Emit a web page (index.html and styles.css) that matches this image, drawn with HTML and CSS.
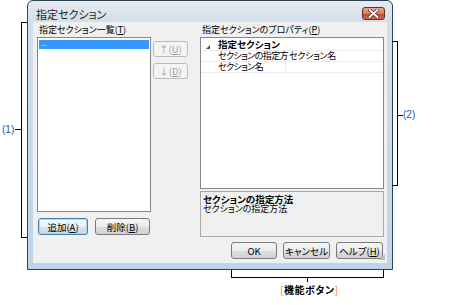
FILE: index.html
```html
<!DOCTYPE html>
<html lang="ja">
<head>
    <meta charset="UTF-8">
    <title>指定セクション</title>
    <link rel="stylesheet" href="styles.css">
</head>
<body>
    <div class="figure">
        <div class="window">
            <div class="titlebar">
                <span class="title">指定セクション</span>
                <span class="close-btn">
                    <svg width="11" height="9" viewBox="0 0 11 9">
                        <path d="M1.5 1 L9.5 8 M9.5 1 L1.5 8" stroke="#5a2418" stroke-width="3.4" stroke-linecap="round"/>
                        <path d="M1.5 1 L9.5 8 M9.5 1 L1.5 8" stroke="#ffffff" stroke-width="2" stroke-linecap="round"/>
                    </svg>
                </span>
            </div>
            <div class="client">
                <div class="main-row">
                    <div class="col-list">
                        <div class="label">指定セクション一覧(<u>T</u>)</div>
                        <div class="listbox">
                            <div class="list-item selected">--</div>
                        </div>
                        <div class="list-buttons">
                            <button class="btn btn-default btn-add">追加(<u>A</u>)</button>
                            <button class="btn btn-delete">削除(<u>B</u>)</button>
                        </div>
                    </div>
                    <div class="col-move">
                        <button class="btn btn-disabled">↑(<u>U</u>)</button>
                        <button class="btn btn-disabled">↓(<u>D</u>)</button>
                    </div>
                    <div class="col-props">
                        <div class="label">指定セクションのプロパティ(<u>P</u>)</div>
                        <div class="propgrid">
                            <div class="pg-category"><span class="pg-arrow"></span>指定セクション</div>
                            <div class="pg-row">
                                <span class="pg-name">セクションの指定方</span>
                                <span class="pg-value">セクション名</span>
                            </div>
                            <div class="pg-row">
                                <span class="pg-name">セクション名</span>
                                <span class="pg-value"></span>
                            </div>
                        </div>
                        <div class="pg-desc">
                            <div class="desc-title">セクションの指定方法</div>
                            <div class="desc-text">セクションの指定方法</div>
                        </div>
                    </div>
                </div>
                <div class="footer">
                    <button class="btn btn-ok">OK</button>
                    <button class="btn btn-cancel">キャンセル</button>
                    <button class="btn btn-help">ヘルプ(<u>H</u>)</button>
                </div>
                <span class="grip"></span>
            </div>
        </div>

        <!-- callouts -->
        <div class="bracket bracket-left"></div>
        <div class="tick tick-left"></div>
        <span class="callout callout-1">(1)</span>

        <div class="bracket bracket-right"></div>
        <div class="tick tick-right"></div>
        <span class="callout callout-2">(2)</span>

        <div class="bracket bracket-bottom"></div>
        <div class="tick tick-bottom"></div>
        <span class="callout callout-buttons"><span class="sq">[</span>機能ボタン<span class="sq">]</span></span>
    </div>
</body>
</html>
```

FILE: styles.css
```css
body {
    margin: 0;
    background: #ffffff;
    color: #000000;
    font-family: "Noto Sans CJK JP", "Liberation Sans", sans-serif;
    font-feature-settings: "palt";
}
.figure {
    position: relative;
    width: 474px;
    height: 305px;
}
.window {
    margin-left: 27px;
    width: 366px;
    height: 270px;
    box-sizing: border-box;
    border: 1px solid #2c4352;
    border-radius: 6px 6px 0 0;
    background: linear-gradient(#e6ebf1, #d3dfeb 20px, #bfd4ea);
    padding: 0 5px 6px 5px;
    display: flex;
    flex-direction: column;
}
.titlebar {
    height: 21px;
    display: flex;
    align-items: flex-start;
    justify-content: space-between;
}
.title {
    font-size: 11px;
    line-height: 13px;
    margin: 7px 0 0 3px;
    color: #1e1e1e;
}
.close-btn {
    width: 23px;
    height: 13px;
    box-sizing: border-box;
    margin: 6px 2px 0 0;
    border: 1px solid #6d2c1f;
    border-radius: 3px;
    background: linear-gradient(#e9a99a, #d67a63 50%, #c4442a 51%, #d2674b);
    display: flex;
    align-items: center;
    justify-content: center;
}
.client {
    position: relative;
    height: 241px;
    box-sizing: border-box;
    background: #f0f0f0;
    padding: 0 3px 4px 4px;
    display: flex;
    flex-direction: column;
    font-size: 9px;
}
.main-row {
    display: flex;
    height: 215px;
}
.label {
    height: 15px;
    line-height: 15px;
    padding-left: 2px;
    white-space: nowrap;
}
.col-list {
    width: 114px;
    display: flex;
    flex-direction: column;
}
.listbox {
    height: 175px;
    box-sizing: border-box;
    border: 1px solid #828790;
    background: #ffffff;
    padding: 2px 1px;
}
.list-item {
    height: 9px;
    line-height: 9px;
    font-size: 7px;
    padding-left: 2px;
}
.list-item.selected {
    background: #3399ff;
    color: #ffffff;
}
.list-buttons {
    display: flex;
    gap: 7px;
    margin-top: 6px;
    padding-left: 1px;
}
.col-move {
    width: 35px;
    margin-left: 2px;
    padding-top: 19px;
    display: flex;
    flex-direction: column;
    gap: 6px;
}
.col-move .btn {
    height: 16px;
}
.col-props {
    width: 184px;
    margin-left: 12px;
    display: flex;
    flex-direction: column;
}
.propgrid {
    height: 152px;
    box-sizing: border-box;
    border: 1px solid #828790;
    background: #ffffff;
}
.pg-category {
    position: relative;
    height: 13px;
    box-sizing: border-box;
    line-height: 12px;
    padding-left: 17px;
    font-weight: bold;
    font-size: 9.5px;
    border-bottom: 1px solid #ececec;
}
.pg-arrow {
    position: absolute;
    left: 5px;
    top: 7px;
    width: 0;
    height: 0;
    border-left: 4px solid transparent;
    border-bottom: 4px solid #4a4a4a;
}
.pg-row {
    display: flex;
    height: 11px;
    box-sizing: border-box;
    line-height: 10px;
    border-bottom: 1px solid #ececec;
    white-space: nowrap;
}
.pg-name {
    width: 85px;
    flex-shrink: 0;
    box-sizing: border-box;
    padding-left: 17px;
    letter-spacing: -0.6px;
    border-right: 1px solid #ececec;
}
.pg-value {
    padding-left: 3px;
    letter-spacing: -0.3px;
}
.pg-desc {
    height: 46px;
    box-sizing: border-box;
    margin-top: 2px;
    border: 1px solid #a9a9a9;
    padding: 2px 2px;
    line-height: 10px;
}
.desc-title {
    font-weight: bold;
    font-size: 9.5px;
}
.footer {
    display: flex;
    justify-content: flex-end;
    gap: 6px;
    margin-top: 5px;
    padding-right: 1px;
}
.btn {
    height: 17px;
    box-sizing: border-box;
    border: 1px solid #7b7b7b;
    border-radius: 3px;
    background: linear-gradient(#f6f6f6, #ececec 50%, #dedede 51%, #d2d2d2);
    font-family: "Noto Sans CJK JP", "Liberation Sans", sans-serif;
    font-feature-settings: "palt";
    font-size: 9.5px;
    line-height: 14px;
    color: #000000;
    padding: 0;
    white-space: nowrap;
}
.btn-default {
    border-color: #3c7fb1;
    box-shadow: inset 0 0 0 1px #a7dcf6;
    background: linear-gradient(#f4f9fc, #e9f1f6 50%, #d9e3ea 51%, #cbd7df);
}
.btn-disabled {
    border-color: #b8bcbf;
    background: #f4f4f4;
    color: #a0a0a0;
}
.btn-add {
    width: 50px;
}
.btn-delete {
    width: 55px;
}
.btn-ok {
    width: 46px;
}
.btn-cancel,
.btn-help {
    width: 47px;
}
.grip {
    position: absolute;
    right: 2px;
    bottom: 3px;
    width: 6px;
    height: 6px;
    background: radial-gradient(circle, #bdbdbd 0.8px, transparent 1px) 0 0 / 2px 2px;
    clip-path: polygon(100% 0, 100% 100%, 0 100%);
}
.bracket {
    position: absolute;
    box-sizing: border-box;
    border: 1px solid #000000;
}
.bracket-left {
    left: 21px;
    top: 22px;
    width: 6px;
    height: 216px;
    border-right: none;
}
.bracket-right {
    left: 392px;
    top: 41px;
    width: 6px;
    height: 145px;
    border-left: none;
}
.bracket-bottom {
    left: 231px;
    top: 270px;
    width: 153px;
    height: 8px;
    border-top: none;
}
.tick {
    position: absolute;
    background: #000000;
}
.tick-left {
    left: 15px;
    top: 129px;
    width: 6px;
    height: 1px;
}
.tick-right {
    left: 398px;
    top: 115px;
    width: 5px;
    height: 1px;
}
.tick-bottom {
    left: 307px;
    top: 278px;
    width: 1px;
    height: 4px;
}
.callout {
    position: absolute;
    font-family: "Liberation Sans", sans-serif;
    font-size: 10px;
    line-height: 12px;
    color: #2458a6;
}
.callout-1 {
    left: 2px;
    top: 124px;
}
.callout-2 {
    left: 403px;
    top: 109px;
}
.callout-buttons {
    left: 280px;
    top: 284px;
    font-family: "Noto Sans CJK JP", sans-serif;
    font-weight: bold;
    color: #000000;
    letter-spacing: 0.5px;
}
.callout-buttons .sq {
    color: #d88a1c;
    font-weight: normal;
}
```
